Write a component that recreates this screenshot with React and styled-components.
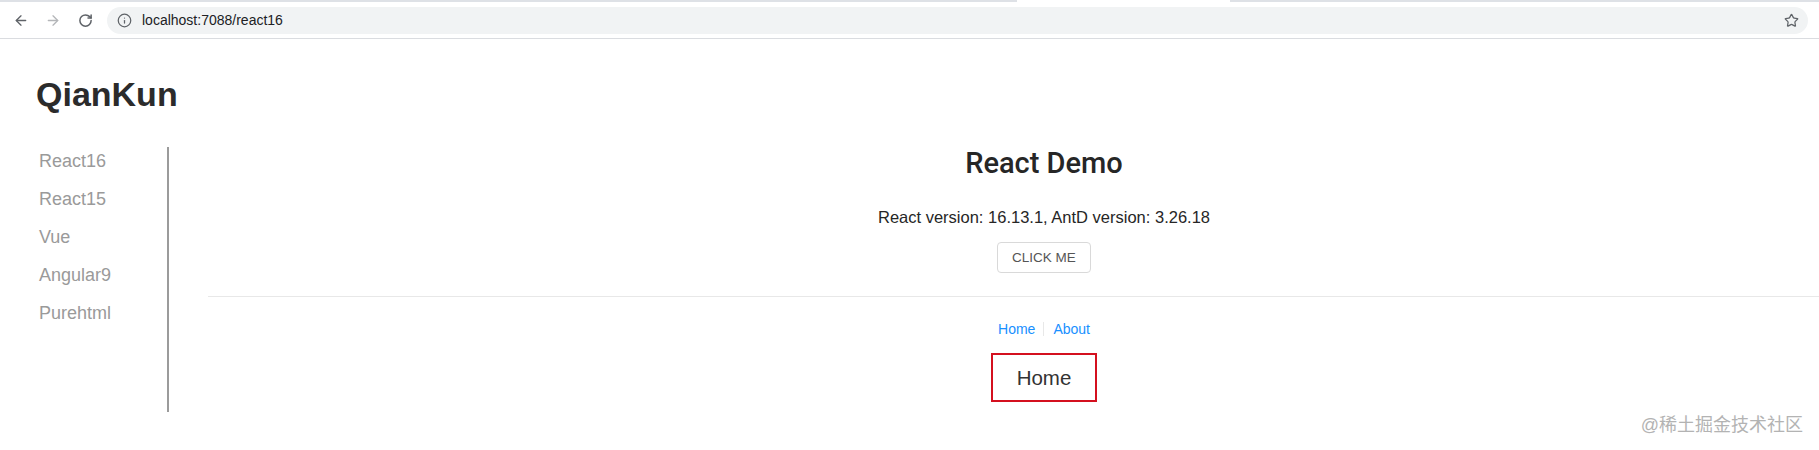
import React from "react";
import styled, { createGlobalStyle } from "styled-components";
import { ArrowLeft, ArrowRight, RotateCw, Info, Star } from "lucide-react";

const GlobalStyle = createGlobalStyle`
  html, body {
    margin: 0;
    padding: 0;
    background: #fff;
    font-family: "Liberation Sans", Arial, sans-serif;
    overflow: hidden;
  }
`;

const Window = styled.div`
  position: relative;
  width: 1819px;
  height: 450px;
  background: #fff;
`;

const TabStrip = styled.div`
  display: flex;
  height: 2px;
`;

const TabEdge = styled.div`
  flex: ${({ w }) => (w ? `0 0 ${w}px` : "1")};
  background: ${({ active }) => (active ? "#fff" : "#dee1e6")};
`;

const Toolbar = styled.div`
  display: flex;
  align-items: center;
  height: 36px;
  padding: 0 11px 0 13px;
  border-bottom: 1px solid #dadce0;
`;

const NavIcon = styled.span`
  display: flex;
  width: 16px;
  justify-content: center;
  margin-right: 16px;
  color: ${({ disabled }) => (disabled ? "#b4b6b9" : "#5f6368")};
`;

const Omnibox = styled.div`
  flex: 1;
  display: flex;
  align-items: center;
  height: 27px;
  margin-left: -2px;
  padding: 0 9px 0 10px;
  border-radius: 14px;
  background: #f1f3f4;
  color: #202124;
  font-size: 14px;
`;

const Url = styled.span`
  flex: 1;
  margin-left: 10px;
`;

const Page = styled.div`
  display: flex;
  flex-direction: column;
`;

const Brand = styled.h1`
  margin: 38px 0 0;
  padding-left: 36px;
  font-size: 34px;
  line-height: 34px;
  font-weight: 700;
  color: #2b2b2b;
`;

const Body = styled.div`
  display: flex;
  margin-top: 36px;
`;

const Sidebar = styled.nav`
  width: 128px;
  padding-left: 39px;
  border-right: 2px solid #9b9b9b;
  display: flex;
  flex-direction: column;
  gap: 10px;
`;

const SideLink = styled.a`
  font-size: 18px;
  line-height: 28px;
  color: #9a9a9a;
  text-decoration: none;
`;

const Content = styled.main`
  flex: 1;
  margin-left: 39px;
  padding-bottom: 10px;
`;

const Centered = styled.div`
  display: flex;
  flex-direction: column;
  align-items: center;
  padding-left: 61px;
`;

const Title = styled.h2`
  margin: 0;
  font-family: Roboto, "Liberation Sans", sans-serif;
  font-size: 29px;
  line-height: 32px;
  font-weight: 500;
  color: #262626;
`;

const Version = styled.p`
  margin: 26px 0 0;
  font-size: 16.5px;
  line-height: 24px;
  color: #262626;
`;

const Button = styled.button`
  margin-top: 13px;
  width: 94px;
  height: 31px;
  border: 1px solid #d9d9d9;
  border-radius: 4px;
  background: #fff;
  color: #555;
  font-family: "Liberation Sans", Arial, sans-serif;
  font-size: 13.5px;
  cursor: pointer;
`;

const Rule = styled.hr`
  margin: 23px 0 0;
  border: none;
  border-top: 1px solid #e8e8e8;
`;

const Links = styled.div`
  display: flex;
  align-items: center;
  margin-top: 21px;
  font-size: 14px;
  line-height: 22px;
`;

const RouteLink = styled.a`
  color: #1890ff;
  text-decoration: none;
`;

const Divider = styled.span`
  width: 1px;
  height: 14px;
  margin: 0 9px 0 8px;
  background: #e8e8e8;
`;

const RouteBox = styled.div`
  margin-top: 13px;
  padding: 0 24px;
  border: 2px solid #d4101f;
  font-size: 20.5px;
  line-height: 45px;
  color: #333;
`;

const Watermark = styled.div`
  position: absolute;
  right: 16px;
  bottom: 14px;
  font-family: "Liberation Sans", "Noto Sans CJK SC", sans-serif;
  font-size: 18px;
  line-height: 22px;
  color: #b3b3b3;
`;

const menu = ["React16", "React15", "Vue", "Angular9", "Purehtml"];

export default function App() {
  return (
    <Window>
      <GlobalStyle />
      <TabStrip>
        <TabEdge w={1017} />
        <TabEdge w={213} active />
        <TabEdge />
      </TabStrip>
      <Toolbar>
        <NavIcon>
          <ArrowLeft size={17} strokeWidth={2} />
        </NavIcon>
        <NavIcon disabled>
          <ArrowRight size={17} strokeWidth={2} />
        </NavIcon>
        <NavIcon>
          <RotateCw size={15} strokeWidth={2.4} />
        </NavIcon>
        <Omnibox>
          <Info size={15} strokeWidth={2} color="#5f6368" />
          <Url>localhost:7088/react16</Url>
          <Star size={15} strokeWidth={2} color="#5f6368" />
        </Omnibox>
      </Toolbar>
      <Page>
        <Brand>QianKun</Brand>
        <Body>
          <Sidebar>
            {menu.map((m) => (
              <SideLink key={m} href="#">
                {m}
              </SideLink>
            ))}
          </Sidebar>
          <Content>
            <Centered>
              <Title>React Demo</Title>
              <Version>React version: 16.13.1, AntD version: 3.26.18</Version>
              <Button>CLICK ME</Button>
            </Centered>
            <Rule />
            <Centered>
              <Links>
                <RouteLink href="#">Home</RouteLink>
                <Divider />
                <RouteLink href="#">About</RouteLink>
              </Links>
              <RouteBox>Home</RouteBox>
            </Centered>
          </Content>
        </Body>
      </Page>
      <Watermark>@稀土掘金技术社区</Watermark>
    </Window>
  );
}
